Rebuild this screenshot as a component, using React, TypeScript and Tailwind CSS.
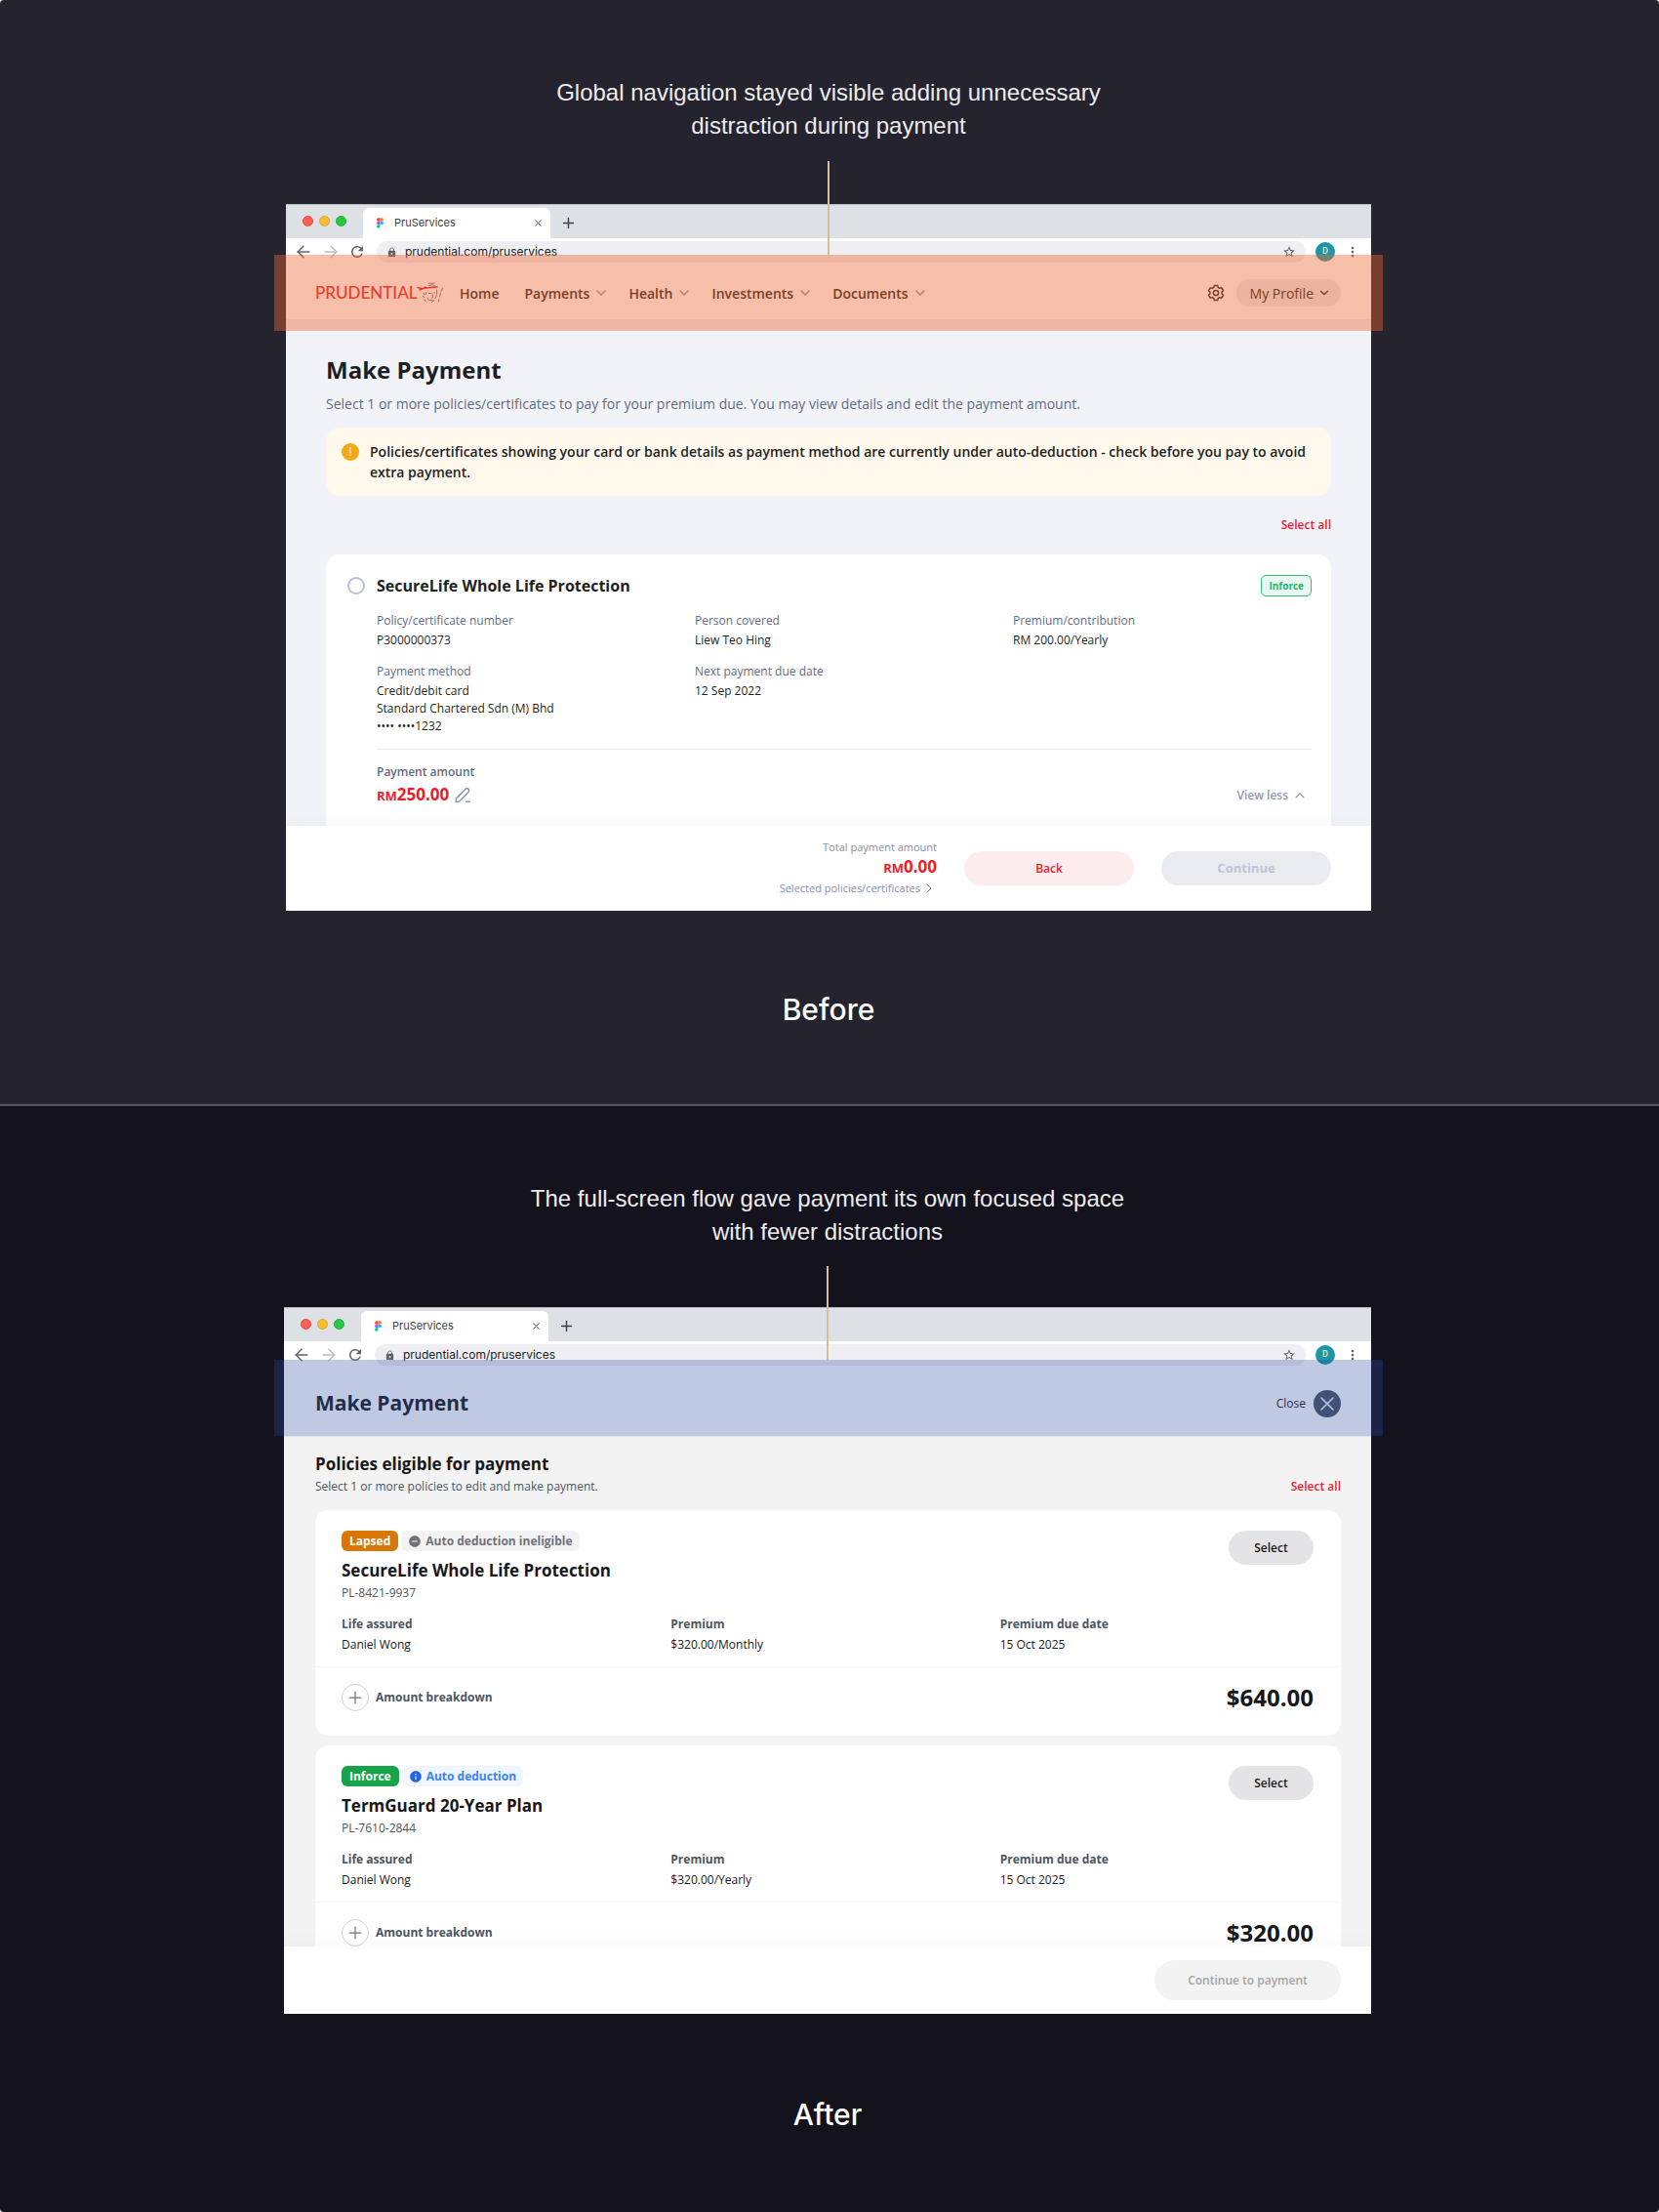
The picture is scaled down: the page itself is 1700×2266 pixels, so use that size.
import { ReactNode } from "react";
import {
  ArrowLeft,
  ArrowRight,
  ChevronDown,
  ChevronRight,
  ChevronUp,
  Plus,
  X,
} from "lucide-react";
import {
  MdInfo,
  MdLock,
  MdMoreVert,
  MdRefresh,
  MdRemoveCircle,
  MdStarBorder,
} from "react-icons/md";

const navItems = ["Payments", "Health", "Investments", "Documents"];

const beforeDetails = [
  { label: "Policy/certificate number", lines: ["P3000000373"] },
  { label: "Person covered", lines: ["Liew Teo Hing"] },
  { label: "Premium/contribution", lines: ["RM 200.00/Yearly"] },
  {
    label: "Payment method",
    lines: ["Credit/debit card", "Standard Chartered Sdn (M) Bhd", "•••• ••••1232"],
  },
  { label: "Next payment due date", lines: ["12 Sep 2022"] },
];

const policies = [
  {
    status: "Lapsed",
    autoDeduction: false,
    name: "SecureLife Whole Life Protection",
    number: "PL-8421-9937",
    premium: "$320.00/Monthly",
    amount: "$640.00",
  },
  {
    status: "Inforce",
    autoDeduction: true,
    name: "TermGuard 20-Year Plan",
    number: "PL-7610-2844",
    premium: "$320.00/Yearly",
    amount: "$320.00",
  },
];

function FigmaIcon() {
  return (
    <svg viewBox="0 0 8 12" className="w-[7px] h-[11px]">
      <path d="M4 0H2a2 2 0 0 0 0 4h2z" fill="#f24e1e" />
      <path d="M4 0h2a2 2 0 0 1 0 4H4z" fill="#ff7262" />
      <path d="M4 4H2a2 2 0 0 0 0 4h2z" fill="#a259ff" />
      <circle cx="6" cy="6" r="2" fill="#1abcfe" />
      <path d="M2 8h2v2a2 2 0 1 1-2-2z" fill="#0acf83" />
    </svg>
  );
}

function FaceLogo() {
  return (
    <svg viewBox="0 0 28 22" className="w-7 h-[22px]" fill="none" strokeLinecap="round">
      <path d="M1 5.500l5 1.500M3 8l3.500-1.500c5-.500 9-1.500 14.500-1.500M6 7L9 5" stroke="#ed1b2e" strokeWidth="1.500" />
      <path
        d="M12 1.500c2-1 4 .5 6-.5M13 3.500c2-1 4-.5 6 0M7 11l1 2M6 14l2 2M8 18l1.500 2M10 10.500l-.5 2M12.500 11.500h2M17.500 11h1.500M16 12l.5 3.500-1.500.5M20.500 8c.5 3 .3 6-1.500 8.500M13.500 18.500h2.500M18 18.500l-2.500 2M11 16l1.500 2.500M26.500 6l-1.500 3.500M24.500 11l-1 4M23 17.500l-.5 2.500"
        stroke="#75625e"
        strokeWidth="0.900"
      />
    </svg>
  );
}

function SettingsIcon() {
  return (
    <svg viewBox="0 0 18 18" className="w-[18px] h-[18px]" fill="none" stroke="currentColor" strokeWidth="1.500" strokeLinejoin="round">
      <path d="M7.300 1.500h3.400l.6 2.100 1.400.8 2.100-.6 1.700 2.900-1.500 1.500v1.600l1.500 1.500-1.700 2.900-2.100-.6-1.400.8-.6 2.100H7.300l-.6-2.100-1.400-.8-2.100.6-1.700-2.900L3 9.800V8.200L1.500 6.700l1.700-2.900 2.100.6 1.400-.8z" />
      <circle cx="9" cy="9" r="2.600" />
    </svg>
  );
}

function EditIcon() {
  return (
    <svg viewBox="0 0 17 17" className="w-[17px] h-[17px]" fill="none" stroke="#8d99b5" strokeWidth="1.600" strokeLinejoin="round" strokeLinecap="round">
      <path d="M1.200 15.300l.3-3.400L11 2.200a2 2 0 0 1 2.900 0l.2.200a2 2 0 0 1 0 2.900L4.600 15z" />
      <path d="M11.500 15.300h4" />
    </svg>
  );
}

function BrowserWindow({ children }: { children: ReactNode }) {
  return (
    <div className="flex flex-col h-[724px] overflow-hidden bg-white">
      <div className="flex h-[35px] shrink-0 items-end bg-[#dde1e5] border-t border-[#b9bcc3]">
        <div className="flex gap-[6px] pl-[17px] pb-3">
          <span className="w-[11px] h-[11px] rounded-full bg-[#ff5f57] border border-[#e24b41]" />
          <span className="w-[11px] h-[11px] rounded-full bg-[#febc2e] border border-[#e1a32d]" />
          <span className="w-[11px] h-[11px] rounded-full bg-[#28c840] border border-[#2aa937]" />
        </div>
        <div className="flex items-center ml-[17px] w-[192px] h-[31px] rounded-t-md bg-white pl-[14px] pr-[7px]">
          <FigmaIcon />
          <span className="ml-[11px] flex-1 text-[11px] text-[#3c4043] font-[Inter]">PruServices</span>
          <button aria-label="Close tab">
            <X className="w-[11px] h-[11px] text-[#3c4043]" />
          </button>
        </div>
        <button aria-label="New tab" className="ml-[10px] mb-[7px]">
          <Plus className="w-[17px] h-[17px] text-[#3c4043]" />
        </button>
      </div>
      <div className="flex h-[29px] shrink-0 items-start bg-white pt-[3px] pl-2 pr-[11px]">
        <div className="flex h-[22px] items-center gap-2 text-[#5f6368]">
          <ArrowLeft className="w-5 h-5" strokeWidth={1.75} />
          <ArrowRight className="w-5 h-5 text-[#babcbe]" strokeWidth={1.75} />
          <MdRefresh className="w-[18px] h-[18px]" />
        </div>
        <div className="flex h-[22px] flex-1 items-center ml-[11px] mr-[10px] rounded-full bg-[#efeef3] pl-[10px] pr-[10px] text-[#5f6368]">
          <MdLock className="w-[11px] h-[11px]" />
          <input
            type="text"
            aria-label="Address"
            readOnly
            value="prudential.com/pruservices"
            className="ml-2 flex-1 bg-transparent text-[12px] text-[#202124] font-[Inter] outline-none"
          />
          <MdStarBorder className="w-[14px] h-[14px]" />
        </div>
        <span className="flex w-5 h-5 mt-[1px] items-center justify-center rounded-full bg-[#1a98a6] text-[9px] text-white font-[Roboto]">
          D
        </span>
        <MdMoreVert className="w-4 h-4 ml-[10px] mt-[3px] text-[#5f6368]" />
      </div>
      {children}
    </div>
  );
}

function Caption({ children }: { children: ReactNode }) {
  return (
    <p className="pt-[78px] h-[164px] text-center text-[24px] leading-[34px] text-[#ececee] font-['Liberation_Sans']">
      {children}
    </p>
  );
}

function BeforeScreen() {
  return (
    <BrowserWindow>
      <nav className="flex h-[54px] shrink-0 items-center bg-white pl-[30px] pr-[31px] text-[14px] font-medium text-[#232323] shadow-sm">
        <a href="#" className="flex items-center w-[148px]">
          <span className="text-[17px] text-[#ed1b2e] font-[Lato]">PRUDENTIAL</span>
          <FaceLogo />
        </a>
        <a href="#" className="mr-[26px] font-semibold">Home</a>
        {navItems.map((item) => (
          <button key={item} className="flex items-center gap-1 mr-5 last-of-type:font-normal font-semibold">
            {item}
            <ChevronDown className="w-4 h-4 text-[#8d8d98]" />
          </button>
        ))}
        <button aria-label="Settings" className="ml-auto mr-3">
          <SettingsIcon />
        </button>
        <button className="flex h-7 items-center gap-1 rounded-full bg-[#ececee] pl-[14px] pr-[10px]">
          My Profile
          <ChevronDown className="w-[14px] h-[14px]" />
        </button>
      </nav>
      <main className="flex-1 min-h-0 overflow-hidden bg-[#f2f3f8] px-[41px] pt-9 text-[#1e1f21]">
        <h1 className="text-[24px] leading-8 font-bold">Make Payment</h1>
        <p className="mt-[9px] text-[14px] leading-5 font-medium text-[#5f6b85]">
          Select 1 or more policies/certificates to pay for your premium due. You may view details and edit the payment amount.
        </p>
        <div className="flex items-start mt-[14px] rounded-[14px] bg-[#fff8ec] py-[14px] pl-4 pr-6">
          <span className="flex w-[18px] h-[18px] mt-[2px] mr-[11px] shrink-0 items-center justify-center rounded-full bg-[#f4a814] text-[12px] text-white">
            !
          </span>
          <p className="text-[14px] leading-[21px] font-semibold">
            Policies/certificates showing your card or bank details as payment method are currently under auto-deduction - check before you pay to avoid extra payment.
          </p>
        </div>
        <div className="flex justify-end mt-5">
          <button className="text-[12px] leading-5 font-semibold text-[#ed1b2e]">Select all</button>
        </div>
        <div className="mt-5 rounded-t-[14px] bg-white pt-5 pl-[22px] pr-5 pb-10">
          <div className="flex items-center">
            <input
              id="policy"
              type="radio"
              className="appearance-none w-[18px] h-[18px] rounded-full border-2 border-[#b9c2d0]"
            />
            <label htmlFor="policy" className="ml-3 text-[16px] leading-6 font-bold">
              SecureLife Whole Life Protection
            </label>
            <span className="ml-auto rounded-[5px] border border-[#2dbf7a] bg-[#e9f8f1] px-[7px] text-[10px] leading-5 font-bold text-[#22b573]">
              Inforce
            </span>
          </div>
          <div className="pl-[30px]">
            <dl className="grid grid-cols-3 gap-x-5 gap-y-[14px] mt-[15px] text-[12px] leading-[18px] font-medium">
              {beforeDetails.map((detail) => (
                <div key={detail.label}>
                  <dt className="text-[#5f6b85]">{detail.label}</dt>
                  <dd className="mt-[2px]">
                    {detail.lines.map((line) => (
                      <div key={line}>{line}</div>
                    ))}
                  </dd>
                </div>
              ))}
            </dl>
            <hr className="mt-[14px] border-[#e9eaf4]" />
            <div className="mt-[14px] text-[12px] leading-[18px] font-semibold text-[#5f6b85]">Payment amount</div>
            <div className="flex items-center mt-[2px]">
              <div className="text-[17px] leading-6 font-bold text-[#ed1b2e]">
                <span className="text-[13px]">RM</span>250.00
              </div>
              <button aria-label="Edit amount" className="ml-[6px]">
                <EditIcon />
              </button>
              <button className="flex items-center gap-1 ml-auto mr-1 text-[12px] font-semibold text-[#8d99b5]">
                View less
                <ChevronUp className="w-4 h-4" strokeWidth={1.75} />
              </button>
            </div>
          </div>
        </div>
      </main>
      <footer className="relative flex h-[87px] shrink-0 items-center justify-end bg-white pr-[41px] shadow-[0_-4px_16px_rgba(0,0,0,0.03)]">
        <div className="mr-7 text-right text-[11px] text-[#8390ae]">
          <div className="leading-4">Total payment amount</div>
          <div className="text-[17px] leading-6 font-bold text-[#ed1b2e]">
            <span className="text-[13px]">RM</span>0.00
          </div>
          <button className="flex items-center gap-px leading-[18px]">
            Selected policies/certificates
            <ChevronRight className="w-4 h-4" strokeWidth={1.5} />
          </button>
        </div>
        <button className="w-[174px] h-[35px] rounded-full bg-[#fdecee] text-[12px] font-semibold text-[#ed1b2e]">
          Back
        </button>
        <button className="ml-7 w-[174px] h-[35px] rounded-full bg-[#eaebef] text-[13px] font-bold text-[#bcc5d8]">
          Continue
        </button>
      </footer>
    </BrowserWindow>
  );
}

function AfterScreen() {
  return (
    <BrowserWindow>
      <header className="flex h-[68px] shrink-0 items-center justify-between bg-white pt-px pl-8 pr-[31px] text-[#1e1f21]">
        <h1 className="text-[21px] font-bold">Make Payment</h1>
        <button className="flex items-center gap-2 text-[12px]">
          Close
          <span className="flex w-7 h-7 items-center justify-center rounded-full bg-[#4b5563] text-white">
            <X className="w-6 h-6" strokeWidth={1.5} />
          </span>
        </button>
      </header>
      <main className="flex-1 min-h-0 overflow-hidden border-t border-[#e0e0e2] bg-[#f3f3f3] pl-8 pr-[31px] pt-4 text-[#18181b]">
        <h2 className="text-[17px] leading-6 font-bold">Policies eligible for payment</h2>
        <div className="flex justify-between mt-px text-[12px] leading-5">
          <p className="text-[#4b5563]">Select 1 or more policies to edit and make payment.</p>
          <button className="font-semibold text-[#ed1b2e]">Select all</button>
        </div>
        {policies.map((policy) => (
          <div key={policy.number} className="mt-[14px] [&+&]:mt-[10px] rounded-[14px] bg-white">
            <div className="pl-[27px] pr-7 pt-[21px] pb-[13px]">
              <div className="flex justify-between">
                <div>
                  <div className="flex gap-[3px] text-[12px] leading-[21px] font-bold">
                    <span className={`rounded-md px-2 text-white ${policy.autoDeduction ? "bg-[#16a34a]" : "bg-[#d97706]"}`}>
                      {policy.status}
                    </span>
                    {policy.autoDeduction ? (
                      <span className="flex items-center gap-1 rounded-md bg-[#eff6ff] px-[7px] text-[#3b82f6]">
                        <MdInfo className="w-[14px] h-[14px] text-[#2563eb]" />
                        Auto deduction
                      </span>
                    ) : (
                      <span className="flex items-center gap-1 rounded-md bg-[#f3f3f4] px-[7px] text-[#71717a]">
                        <MdRemoveCircle className="w-[14px] h-[14px]" />
                        Auto deduction ineligible
                      </span>
                    )}
                  </div>
                  <h3 className="mt-2 text-[17px] leading-6 font-bold">{policy.name}</h3>
                  <p className="mt-[2px] text-[12px] leading-[18px] text-[#4b5563]">{policy.number}</p>
                </div>
                <button className="w-[87px] h-[35px] rounded-full bg-[#e4e4e6] text-[12px] font-semibold">
                  Select
                </button>
              </div>
              <dl className="grid grid-cols-3 gap-x-4 mt-[14px] text-[12px] leading-[18px]">
                <div>
                  <dt className="font-bold text-[#4b5563]">Life assured</dt>
                  <dd className="mt-[3px]">Daniel Wong</dd>
                </div>
                <div>
                  <dt className="font-bold text-[#4b5563]">Premium</dt>
                  <dd className="mt-[3px]">{policy.premium}</dd>
                </div>
                <div>
                  <dt className="font-bold text-[#4b5563]">Premium due date</dt>
                  <dd className="mt-[3px]">15 Oct 2025</dd>
                </div>
              </dl>
            </div>
            <div className="flex items-center justify-between border-t border-[#f4f4f5] pl-[27px] pr-7 pt-[17px] pb-[25px]">
              <button className="flex items-center gap-[7px] text-[12px] font-bold text-[#4b5563]">
                <span className="flex w-7 h-7 items-center justify-center rounded-full border border-[#d4d4d8] text-[#71717a]">
                  <Plus className="w-5 h-5" strokeWidth={1.5} />
                </span>
                Amount breakdown
              </button>
              <span className="text-[24px] leading-7 font-bold">{policy.amount}</span>
            </div>
          </div>
        ))}
      </main>
      <footer className="relative flex h-[69px] shrink-0 items-center justify-end bg-white pr-[31px] shadow-[0_-4px_16px_rgba(0,0,0,0.03)]">
        <button className="w-[191px] h-[41px] rounded-full bg-[#f3f3f3] text-[12px] font-semibold text-[#a3a3a3]">
          Continue to payment
        </button>
      </footer>
    </BrowserWindow>
  );
}

export default function App() {
  return (
    <div className="bg-white font-['Open_Sans',sans-serif]">
      <section className="h-[1133px] rounded-t-[4px] border-b-2 border-[#55545f] bg-[#25232e] pr-[2px]">
        <Caption>
          Global navigation stayed visible adding unnecessary
          <br />
          distraction during payment
        </Caption>
        <div className="relative mx-auto mt-[45px] max-w-[1112px]">
          <BeforeScreen />
          <div className="pointer-events-none absolute -inset-x-3 top-[52px] h-[78px] bg-[#ec6333]/42" />
          <div className="absolute left-1/2 -top-[44px] h-24 w-[2px] -translate-x-1/2 bg-[#d1bf9e]" />
        </div>
        <h2 className="mt-[81px] text-center text-[30px] leading-10 font-medium text-white font-[Inter]">Before</h2>
      </section>
      <section className="h-[1133px] rounded-b-[4px] bg-[#13121d] pr-1">
        <Caption>
          The full-screen flow gave payment its own focused space
          <br />
          with fewer distractions
        </Caption>
        <div className="relative mx-auto mt-[42px] max-w-[1114px]">
          <AfterScreen />
          <div className="pointer-events-none absolute -left-[10px] -right-3 top-[54px] h-[78px] bg-[#2e4da5]/30" />
          <div className="absolute left-1/2 -top-[42px] h-24 w-[2px] -translate-x-1/2 bg-[#d1bf9e]" />
        </div>
        <h2 className="mt-[83px] text-center text-[30px] leading-10 font-medium text-white font-[Inter]">After</h2>
      </section>
    </div>
  );
}
